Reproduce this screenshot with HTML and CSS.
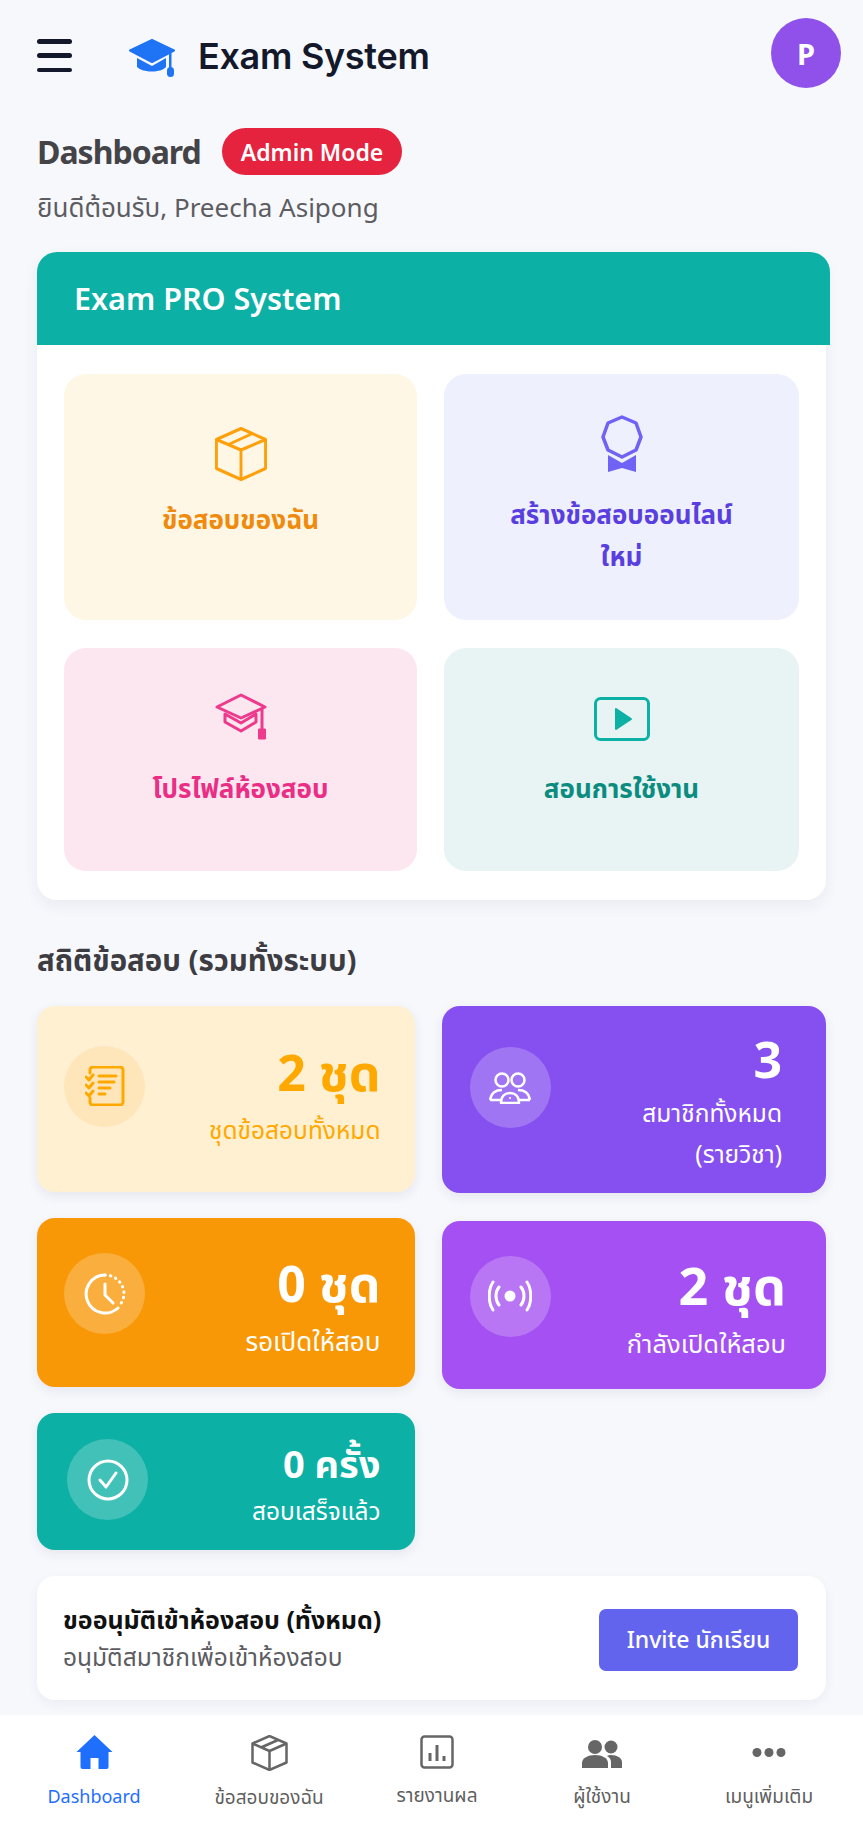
FILE: index.html
```html
<!DOCTYPE html>
<html lang="th">
<head>
  <meta charset="UTF-8">
  <meta name="viewport" content="width=device-width, initial-scale=1.0">
  <title>Exam System</title>
  <link rel="stylesheet" href="styles.css">
</head>
<body>
<header class="topbar">
  <button class="menu-btn" aria-label="menu"><span></span><span></span><span></span></button>
  <div class="brand">
    <svg class="brand-icon" viewBox="0 0 47 38">
      <path d="M23 1 45 11.500 23 23 1 11.500Z" fill="#1f74f5" stroke="#1f74f5" stroke-width="2" stroke-linejoin="round"/>
      <path d="M8 19 23 27 37 19V28C32 34 14 34 8 28Z" fill="#1f74f5"/>
      <rect x="40" y="14" width="2.5" height="16" fill="#1f74f5"/>
      <rect x="38" y="28" width="7" height="10" rx="3.5" fill="#1f74f5"/>
    </svg>
    <span class="brand-name">Exam System</span>
  </div>
  <div class="avatar">P</div>
</header>

<main class="page">
  <div class="title-row">
    <h1>Dashboard</h1>
    <span class="badge">Admin Mode</span>
  </div>
  <p class="welcome">ยินดีต้อนรับ, Preecha Asipong</p>

  <section class="pro-card">
    <h2 class="pro-head">Exam PRO System</h2>
    <div class="tiles">
      <a class="tile tile-amber">
        <svg class="tile-icon" width="52" height="54" viewBox="0 0 54 54" preserveAspectRatio="none" fill="none" stroke="#ff9f0a" stroke-width="3" stroke-linejoin="round">
          <path d="M27 1.500 52.500 12.500V41.500L27 52.500 1.500 41.500V12.500Z"/>
          <path d="M1.500 12.500 27 23 52.500 12.500M27 23V52.500"/>
          <path d="M14 17.500 39 6.500" stroke-width="3"/>
        </svg>
        <span>ข้อสอบของฉัน</span>
      </a>
      <a class="tile tile-indigo">
        <svg class="tile-icon" width="44" height="58" viewBox="0 0 44 58" fill="none">
          <path d="M22 2 36 8 41 22 36 35 22 42 8 35 3 22 8 8Z" stroke="#6f62f5" stroke-width="3.5" stroke-linejoin="round"/>
          <path d="M8 40 22 48 36 40V57L22 53 8 57Z" fill="#6f62f5"/>
        </svg>
        <span>สร้างข้อสอบออนไลน์<br>ใหม่</span>
      </a>
      <a class="tile tile-pink">
        <svg class="tile-icon" width="52" height="48" viewBox="0 0 52 48" fill="none" stroke="#ee3a8c" stroke-width="3" stroke-linejoin="round">
          <path d="M26 2 50 14 26 25 2 14Z"/>
          <path d="M10 21V29L26 38 41 29V21L26 30Z"/>
          <path d="M47 15V36"/>
          <rect x="43.5" y="36" width="7" height="10" fill="#ee3a8c" stroke-width="1"/>
        </svg>
        <span>โปรไฟล์ห้องสอบ</span>
      </a>
      <a class="tile tile-teal">
        <svg class="tile-icon" width="56" height="44" viewBox="0 0 56 44" fill="none">
          <rect x="1.500" y="1.500" width="53" height="41" rx="5" stroke="#0db0a5" stroke-width="3"/>
          <path d="M22 12 37 22 22 32Z" fill="#0db0a5" stroke="#0db0a5" stroke-width="2" stroke-linejoin="round"/>
        </svg>
        <span>สอนการใช้งาน</span>
      </a>
    </div>
  </section>

  <h3 class="section-title">สถิติข้อสอบ (รวมทั้งระบบ)</h3>

  <div class="stats">
    <div class="stats-col">
      <div class="stat stat-cream">
        <div class="stat-icon">
          <svg width="40" height="40" viewBox="0 0 40 40" fill="none" stroke="#ffa800" stroke-width="3" stroke-linecap="round" stroke-linejoin="round">
            <path d="M5 7V4A3 3 0 0 1 8 1H35A3 3 0 0 1 38 4V36A3 3 0 0 1 35 39H8A3 3 0 0 1 5 36V32"/>
            <path d="M14 10H31M14 16H29M14 22H25M14 28H20"/>
            <path d="M1 11 4 14 8 9M1 19 4 22 8 17M1 27 4 30 8 25"/>
          </svg>
        </div>
        <div class="stat-text">
          <div class="stat-num">2 ชุด</div>
          <div class="stat-label">ชุดข้อสอบทั้งหมด</div>
        </div>
      </div>
      <div class="stat stat-orange">
        <div class="stat-icon">
          <svg width="42" height="42" viewBox="0 0 42 42" fill="none" stroke="#fff" stroke-width="3" stroke-linecap="round" stroke-linejoin="round">
            <path d="M21 2A19 19 0 1 0 34 35"/>
            <path d="M21 2A19 19 0 0 1 40 21 19 19 0 0 1 35 33" stroke-dasharray="0.5 5"/>
            <path d="M21 11V22L29 30"/>
          </svg>
        </div>
        <div class="stat-text">
          <div class="stat-num">0 ชุด</div>
          <div class="stat-label">รอเปิดให้สอบ</div>
        </div>
      </div>
      <div class="stat stat-teal">
        <div class="stat-icon">
          <svg width="42" height="42" viewBox="0 0 42 42" fill="none" stroke="#fff" stroke-width="3" stroke-linecap="round" stroke-linejoin="round">
            <circle cx="21" cy="21" r="19"/>
            <path d="M13 21 19 28 29 14"/>
          </svg>
        </div>
        <div class="stat-text">
          <div class="stat-num">0 ครั้ง</div>
          <div class="stat-label">สอบเสร็จแล้ว</div>
        </div>
      </div>
    </div>
    <div class="stats-col stats-col-right">
      <div class="stat stat-violet">
        <div class="stat-icon">
          <svg width="42" height="32" viewBox="0 0 42 32" fill="none" stroke="#fff" stroke-width="2.5" stroke-linejoin="round">
            <circle cx="13" cy="8" r="6.5"/>
            <circle cx="29" cy="8" r="6.5"/>
            <path d="M1 28C2 21 7 18 13 18M41 28C40 21 35 18 29 18M1 28H12M30 28H41"/>
            <path d="M12 31C12 24 16 21 21 21 26 21 30 24 30 31Z"/>
            <circle cx="21" cy="26" r="1" fill="#fff" stroke="none"/>
          </svg>
        </div>
        <div class="stat-text">
          <div class="stat-num">3</div>
          <div class="stat-label">สมาชิกทั้งหมด<br>(รายวิชา)</div>
        </div>
      </div>
      <div class="stat stat-purple">
        <div class="stat-icon">
          <svg width="44" height="32" viewBox="0 0 44 32" fill="none" stroke="#fff" stroke-width="3" stroke-linecap="round">
            <circle cx="22" cy="16" r="5.500" fill="#fff" stroke="none"/>
            <path d="M11 7C7 12 7 20 11 25M33 7C37 12 37 20 33 25"/>
            <path d="M5 2C0 9 0 23 5 30M39 2C44 9 44 23 39 30"/>
          </svg>
        </div>
        <div class="stat-text">
          <div class="stat-num">2 ชุด</div>
          <div class="stat-label">กำลังเปิดให้สอบ</div>
        </div>
      </div>
    </div>
  </div>

  <section class="invite">
    <div>
      <div class="invite-title">ขออนุมัติเข้าห้องสอบ (ทั้งหมด)</div>
      <div class="invite-sub">อนุมัติสมาชิกเพื่อเข้าห้องสอบ</div>
    </div>
    <button class="invite-btn">Invite นักเรียน</button>
  </section>
</main>

<nav class="bottom-nav">
  <a class="nav-item active">
    <svg width="37" height="35" viewBox="0 0 37 35"><path d="M18.500 0 36.500 17H32.500V32A2 2 0 0 1 30.500 34H22.500V23H14.500V34H6.500A2 2 0 0 1 4.500 32V17H.5Z" fill="#1f6fff"/></svg>
    <span>Dashboard</span>
  </a>
  <a class="nav-item">
    <svg width="37" height="36" viewBox="0 0 37 36" fill="none" stroke="#666" stroke-width="2.5" stroke-linejoin="round"><path d="M18.500 1 35.500 8.500V27.500L18.500 35 1.500 27.500V8.500Z"/><path d="M1.500 8.500 18.500 16 35.500 8.500M18.500 16V35M10 12.500 27 5"/></svg>
    <span>ข้อสอบของฉัน</span>
  </a>
  <a class="nav-item">
    <svg width="34" height="34" viewBox="0 0 34 34" fill="none" stroke="#666" stroke-width="2.5"><rect x="1.500" y="1.500" width="31" height="31" rx="3"/><path d="M10 26V18M17 26V10M24 26V21" stroke-width="3"/></svg>
    <span>รายงานผล</span>
  </a>
  <a class="nav-item">
    <svg width="40" height="35" viewBox="0 0 40 35" fill="#666"><circle cx="13" cy="12" r="7"/><circle cx="29" cy="12" r="6.5"/><path d="M0 33V28C0 23 6 20 13 20 20 20 26 23 26 28V33Z"/><path d="M29 20C35 20 40 23 40 27V33H29V27C29 24 27 22 25 21 26 20 28 20 29 20Z"/></svg>
    <span>ผู้ใช้งาน</span>
  </a>
  <a class="nav-item">
    <svg width="34" height="35" viewBox="0 0 34 35" fill="#666"><circle cx="5" cy="17.500" r="4.500"/><circle cx="17" cy="17.500" r="4.500"/><circle cx="29" cy="17.500" r="4.500"/></svg>
    <span>เมนูเพิ่มเติม</span>
  </a>
</nav>
</body>
</html>
```
FILE: styles.css
```css
:root {
  --page-bg: #f7f8fc;
  --text-dark: #14182b;
  --text-grey: #5c5c62;
  --teal: #0db0a5;
  --blue: #1f6fff;
}

* {
  box-sizing: border-box;
}

body {
  margin: 0;
  width: 863px;
  height: 1823px;
  overflow: hidden;
  background-color: var(--page-bg);
  color: var(--text-dark);
  font-family: "Noto Sans", "Noto Sans Thai", "Noto Sans Thai Looped", Inter, sans-serif;
  position: relative;
}

h1, h2, h3, p {
  margin: 0;
}

/* top bar */
.topbar {
  height: 106px;
  padding: 18px 22px 0 37px;
  display: flex;
  align-items: flex-start;
}

.menu-btn {
  width: 35px;
  height: 33px;
  margin-top: 21px;
  padding: 0;
  border: 0;
  background: none;
  display: flex;
  flex-direction: column;
  justify-content: space-between;
}

.menu-btn span {
  display: block;
  height: 4.5px;
  border-radius: 3px;
  background-color: var(--text-dark);
}

.brand {
  display: flex;
  align-items: center;
  gap: 22px;
  margin-left: 57px;
  margin-top: 16px;
}

.brand-icon {
  width: 47px;
  height: 38px;
  margin-top: 4px;
}

.brand-name {
  font-family: Inter, "Noto Sans", sans-serif;
  font-size: 36px;
  font-weight: 600;
  letter-spacing: -0.3px;
}

.avatar {
  width: 70px;
  height: 70px;
  margin-left: auto;
  border-radius: 50%;
  background-color: #9050ea;
  color: #fff;
  font-size: 29px;
  font-weight: 700;
  display: flex;
  align-items: center;
  justify-content: center;
}

/* page */
.page {
  padding: 0 37px;
}

.title-row {
  display: flex;
  align-items: center;
  gap: 21px;
  height: 47px;
  margin-top: 22px;
}

.title-row h1 {
  font-size: 32px;
  font-weight: 700;
  letter-spacing: -1px;
  color: #444448;
}

.badge {
  height: 47px;
  padding: 0 19px;
  border-radius: 24px;
  background-color: #e5233e;
  color: #fff;
  font-size: 23px;
  font-weight: 600;
  display: flex;
  align-items: center;
}

.welcome {
  margin-top: 13px;
  font-size: 26px;
  line-height: 38px;
  color: var(--text-grey);
}

.pro-card {
  width: 789px;
  margin-top: 26px;
  background-color: #fff;
  border-radius: 20px;
  box-shadow: 0 6px 16px rgba(40, 40, 90, 0.06);
}

.pro-head {
  width: 793px;
  height: 93px;
  padding-left: 37px;
  border-radius: 20px 20px 0 0;
  background-color: var(--teal);
  color: #fff;
  font-size: 30.5px;
  font-weight: 600;
  line-height: 93px;
}

.tiles {
  display: grid;
  grid-template-columns: 353px 355px;
  grid-template-rows: 246px 223px;
  column-gap: 27px;
  row-gap: 28px;
  padding: 29px 0 29px 27px;
}

.tile {
  border-radius: 22px;
  padding-top: 41px;
  display: flex;
  flex-direction: column;
  align-items: center;
  text-align: center;
  font-size: 26px;
  font-weight: 700;
  line-height: 42px;
}

.tile-icon {
  flex: none;
}

.tile-amber {
  background-color: #fff7e6;
  color: #ef8a0c;
  padding-top: 53px;
}

.tile-amber .tile-icon {
  margin-bottom: 17px;
}

.tile-indigo {
  background-color: #eef0fd;
  color: #5a3fe0;
}

.tile-indigo .tile-icon {
  margin-bottom: 20px;
}

.tile-pink {
  background-color: #fce6ef;
  color: #ea2e85;
  padding-top: 45px;
}

.tile-pink .tile-icon {
  margin-bottom: 26px;
}

.tile-teal {
  background-color: #e7f4f3;
  color: #0c8c80;
  padding-top: 49px;
}

.tile-teal .tile-icon {
  margin-bottom: 26px;
}

.section-title {
  margin-top: 39px;
  font-size: 29.4px;
  font-weight: 700;
  line-height: 42px;
  color: #3c3c42;
}

/* stats */
.stats {
  display: flex;
  gap: 27px;
  margin-top: 25px;
}

.stats-col {
  width: 378px;
  display: flex;
  flex-direction: column;
  gap: 26px;
}

.stats-col-right {
  width: 385px;
  gap: 28px;
}

.stat {
  border-radius: 18px;
  padding: 0 34px 0 27px;
  display: flex;
  align-items: center;
  justify-content: space-between;
  color: #fff;
  box-shadow: 0 4px 12px rgba(40, 40, 90, 0.08);
}

.stat-icon {
  width: 81px;
  height: 81px;
  flex: none;
  border-radius: 50%;
  background-color: rgba(255, 255, 255, 0.22);
  display: flex;
  align-items: center;
  justify-content: center;
  margin-top: -18px;
}

.stat-text {
  text-align: right;
  margin-top: 5px;
}

.stat-num {
  font-size: 50px;
  font-weight: 700;
  line-height: 62px;
  margin-bottom: 9px;
}

.stat-label {
  font-size: 24.5px;
  line-height: 36px;
}

.stat-cream {
  height: 186px;
  background-color: #fff0d2;
  color: #ffa800;
}

.stat-cream .stat-icon {
  background-color: rgba(250, 190, 90, 0.2);
  margin-top: -26px;
}

.stat-cream .stat-text {
  margin-top: -10px;
}

.stat-orange {
  height: 169px;
  background-color: #f99807;
}

.stat-orange .stat-label {
  font-size: 26px;
}

.stat-teal {
  height: 137px;
  background-color: var(--teal);
}

.stat-teal .stat-icon {
  margin-top: -4px;
  margin-left: 3px;
}

.stat-teal .stat-text {
  margin-top: 0;
}

.stat-teal .stat-num {
  font-size: 38px;
  line-height: 56px;
  margin-bottom: 2px;
}

.stat-violet {
  height: 187px;
  padding-right: 44px;
  background-color: #864ff0;
}

.stat-violet .stat-icon {
  margin-top: -24px;
  margin-left: 1px;
}

.stat-violet .stat-text {
  margin-top: 2px;
}

.stat-violet .stat-num {
  margin-bottom: 2px;
}

.stat-violet .stat-label {
  line-height: 41px;
}

.stat-purple {
  height: 168px;
  padding-right: 40px;
  background-color: #a450f2;
}

.stat-purple .stat-icon {
  margin-left: 1px;
}

.stat-purple .stat-num {
  font-size: 52px;
}

.stat-purple .stat-label {
  font-size: 25.5px;
}

/* invite */
.invite {
  width: 789px;
  height: 124px;
  margin-top: 26px;
  padding: 0 28px 0 26px;
  background-color: #fff;
  border-radius: 18px;
  box-shadow: 0 4px 12px rgba(40, 40, 90, 0.05);
  display: flex;
  align-items: center;
  justify-content: space-between;
}

.invite-title {
  font-size: 25px;
  font-weight: 700;
  line-height: 38px;
  color: #111;
}

.invite-sub {
  font-size: 24.5px;
  line-height: 38px;
  color: var(--text-grey);
}

.invite-btn {
  width: 199px;
  height: 62px;
  margin-top: 4px;
  border: 0;
  border-radius: 7px;
  background-color: #6364ee;
  color: #fff;
  font-family: inherit;
  font-size: 23px;
  font-weight: 500;
}

/* bottom nav */
.bottom-nav {
  position: absolute;
  left: 0;
  right: 0;
  bottom: 0;
  height: 108px;
  padding: 20px 0 0 10px;
  background-color: #fff;
  display: grid;
  grid-template-columns: 168px 182px 154px 176px 158px;
}

.nav-item {
  display: flex;
  flex-direction: column;
  align-items: center;
  gap: 11px;
  font-size: 19px;
  line-height: 30px;
  color: #5f5f5f;
}

.nav-item.active {
  color: var(--blue);
  font-size: 18px;
}
```
